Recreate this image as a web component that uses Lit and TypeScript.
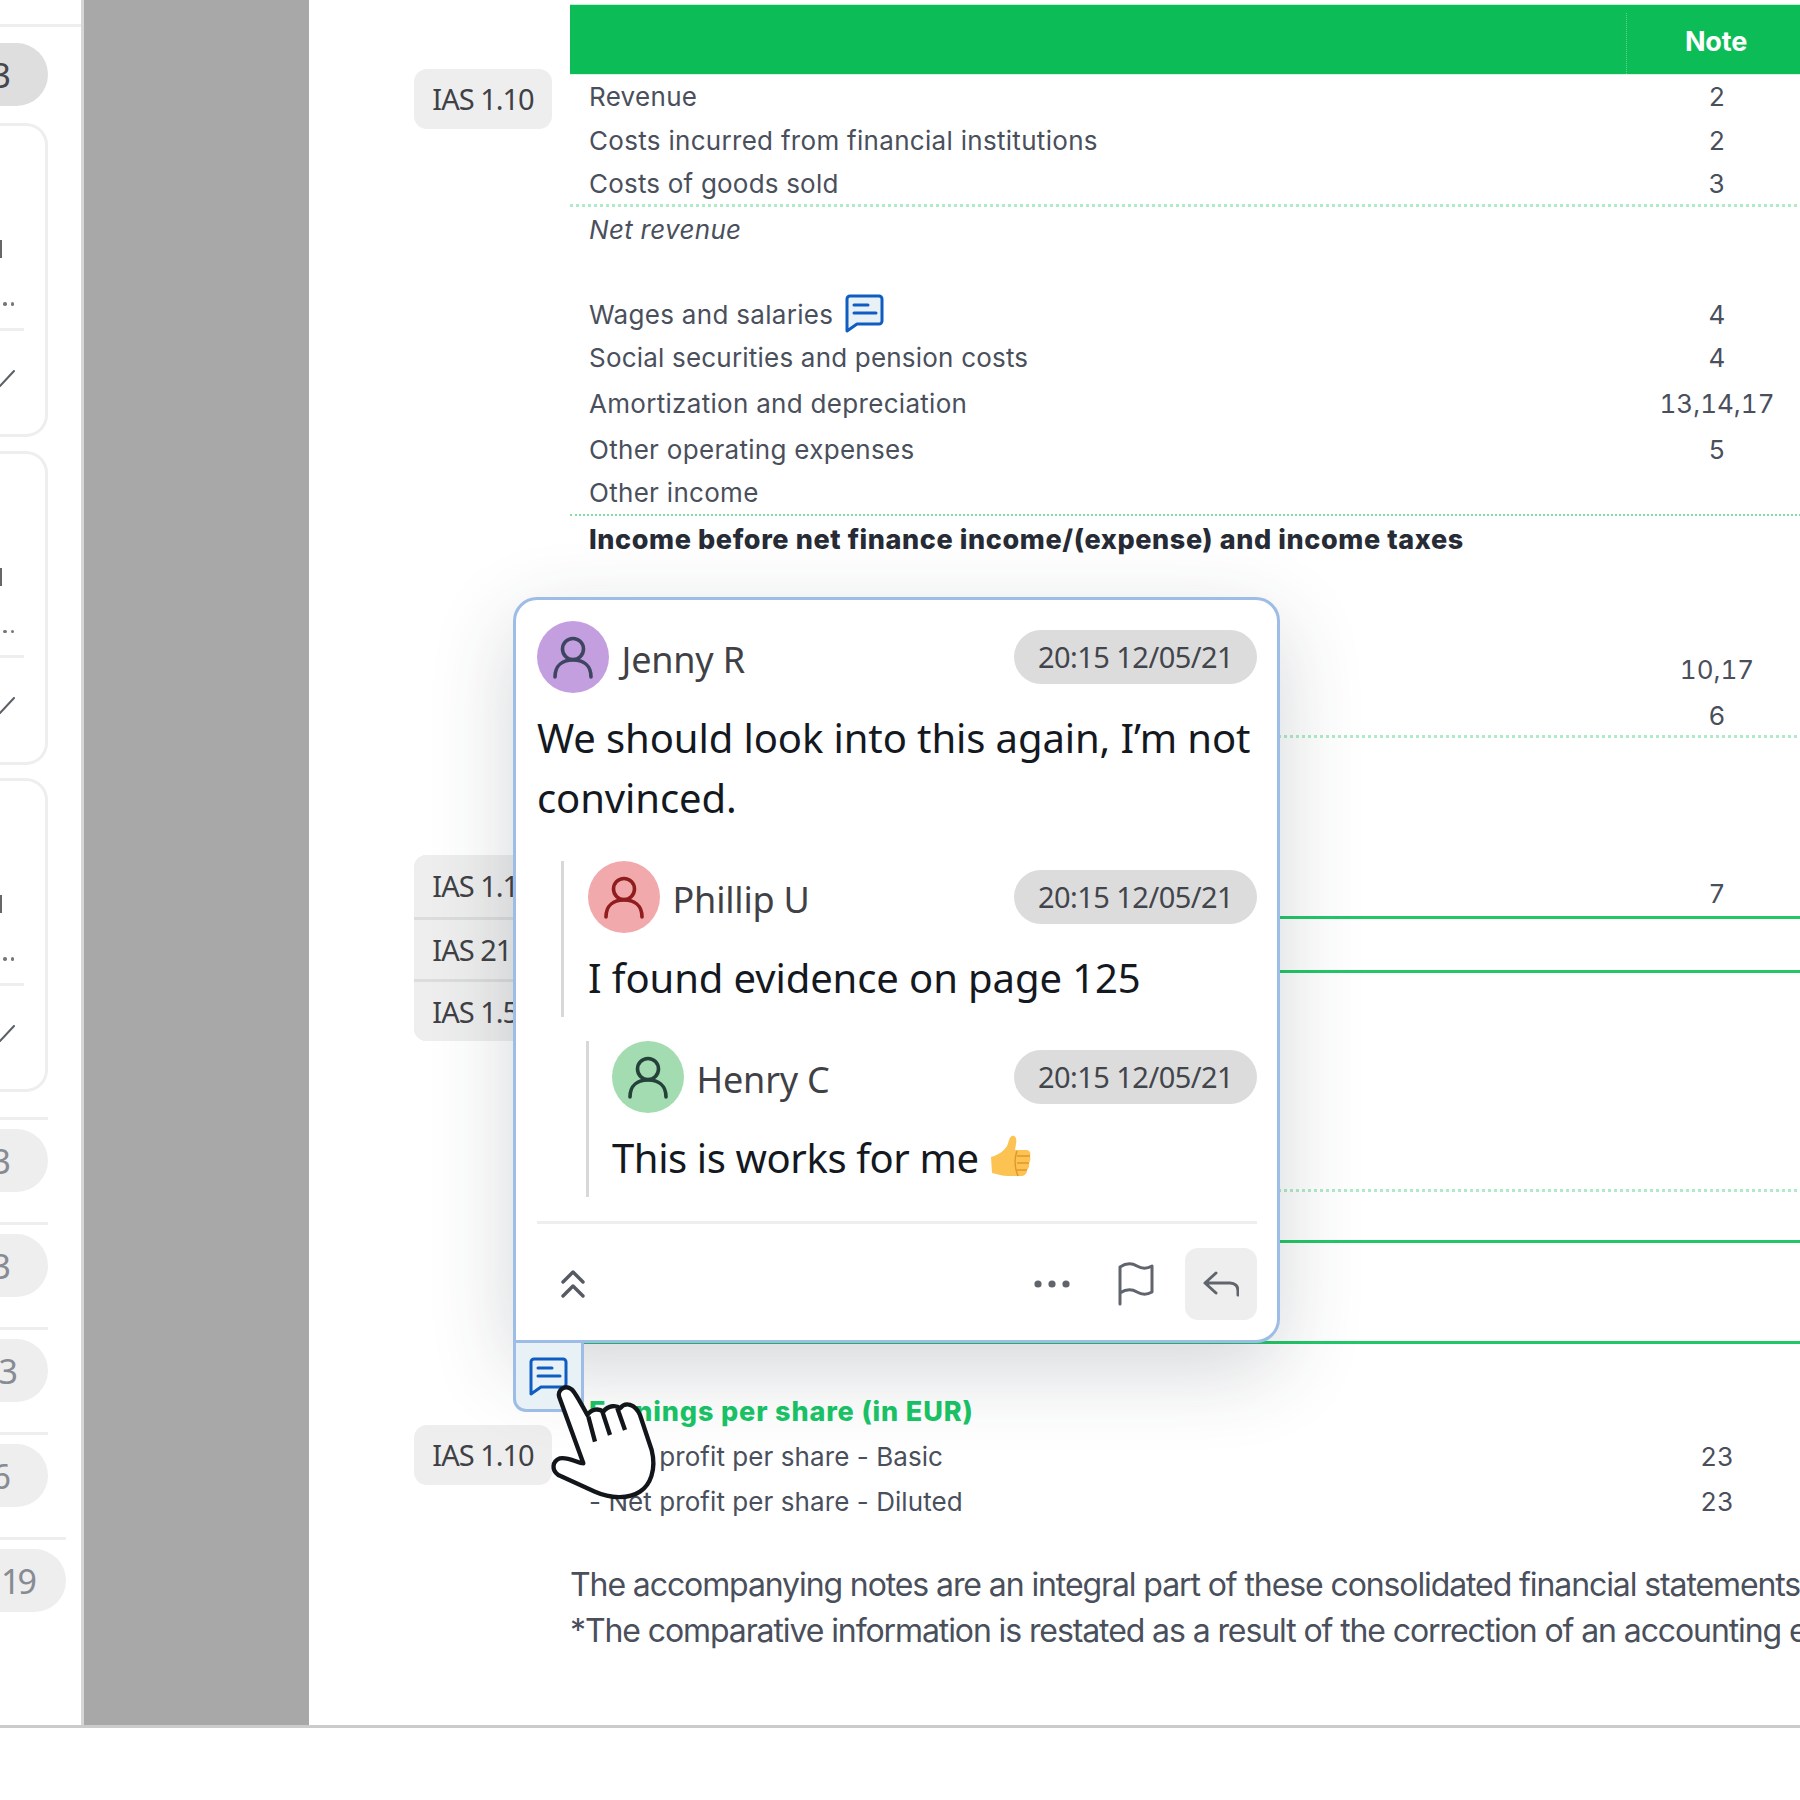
import { LitElement, html, css, svg } from "lit";
import { customElement } from "lit/decorators.js";

type Row = { label?: string; note?: string; h: number; cls?: string; icon?: boolean };

const ROWS: Row[] = [
  { label: "Revenue", note: "2", h: 43 },
  { label: "Costs incurred from financial institutions", note: "2", h: 44 },
  { label: "Costs of goods sold", note: "3", h: 45, cls: "dot nar" },
  { label: "Net revenue", h: 44, cls: "ital" },
  { h: 41 },
  { label: "Wages and salaries", note: "4", h: 44, icon: true },
  { label: "Social securities and pension costs", note: "4", h: 43, cls: "nar" },
  { label: "Amortization and depreciation", note: "13,14,17", h: 48 },
  { label: "Other operating expenses", note: "5", h: 44 },
  { label: "Other income", h: 45, cls: "dot thin" },
  { label: "Income before net finance income/(expense) and income taxes", h: 46, cls: "bold" },
  { h: 85 },
  { note: "10,17", h: 44 },
  { note: "6", h: 47, cls: "dot lo" },
  { h: 132 },
  { note: "7", h: 49, cls: "solid" },
  { h: 54, cls: "solid" },
  { h: 219, cls: "dot" },
  { h: 51, cls: "solid" },
  { h: 101, cls: "solid" },
  { h: 45 },
  { label: "Earnings per share (in EUR)", h: 44, cls: "earn" },
  { label: "- Net profit per share - Basic", note: "23", h: 46, cls: "nar2" },
  { label: "- Net profit per share - Diluted", note: "23", h: 44, cls: "nar2" },
];

const chat = (fill: string) => svg`
  <path d="M5 2h29a3 3 0 0 1 3 3v22a3 3 0 0 1-3 3H12L2 37V5a3 3 0 0 1 3-3Z" fill="${fill}" stroke="#0f5cc2" stroke-width="3" stroke-linejoin="round"/>
  <path d="M9 11h14M9 19h22" fill="none" stroke="#0f5cc2" stroke-width="3" stroke-linecap="round"/>`;

const person = (color: string) => html`<svg viewBox="0 0 72 72" width="72" height="72">
  <circle cx="36" cy="28" r="10.5" fill="none" stroke="${color}" stroke-width="3.6"/>
  <path d="M18 56C18 44 26 39 36 39C46 39 54 44 54 56" fill="none" stroke="${color}" stroke-width="3.6" stroke-linecap="round"/>
</svg>`;

@customElement("app-root")
export class AppRoot extends LitElement {
  static styles = css`
    :host { display: block; width: 1800px; height: 1800px; overflow: hidden; background: #fff; position: relative; font-family: "Noto Sans", sans-serif; }
    * { box-sizing: border-box; }
    .frame { display: flex; height: 1728px; border-bottom: 3px solid #cbcbcb; overflow: hidden; }

    .side { width: 84px; flex: none; border-right: 3px solid #d6d6d6; display: flex; flex-direction: column; overflow: hidden; }
    .topline { height: 27px; flex: none; border-bottom: 3px solid #eee; }
    .pill { width: 48px; height: 63px; flex: none; border-radius: 0 32px 32px 0; background: #eee; color: #878b93; font-size: 34px; display: flex; align-items: center; justify-content: flex-end; overflow: hidden; white-space: nowrap; }
    .pill.first { background: #dedede; color: #44474d; margin-top: 16px; }
    .pad38 { padding-right: 37px; }
    .pad32 { padding-right: 30px; }
    .pill.wide { width: 66px; padding-right: 32px; letter-spacing: -3px; }
    .card { width: 48px; height: 314px; flex: none; margin-top: 13.5px; border: 3px solid #eee; border-left: 0; border-radius: 0 22px 22px 0; display: flex; flex-direction: column; }
    .card.one { margin-top: 17px; }
    .frag { width: 2px; height: 18px; margin-top: 114px; background: #666; }
    .dots { display: flex; gap: 4px; padding-left: 3px; margin-top: 44px; }
    .dots i { width: 3.5px; height: 3.5px; border-radius: 50%; background: #777; }
    .sep { width: 24px; height: 3px; margin-top: 22px; background: #eee; }
    .check { display: block; margin-top: 39px; }
    .rule { width: 48px; height: 3px; flex: none; background: #eee; margin-top: 30px; margin-bottom: 9px; }
    .rule.wide { width: 66px; }
    .rule.firstrule { margin-top: 25px; }

    .gray { width: 225px; flex: none; background: #a8a8a8; }

    .doc { flex: 1; display: flex; min-width: 0; }
    .gutter { width: 261px; flex: none; padding: 69px 0 0 105px; display: flex; flex-direction: column; }
    .chip { width: 138px; height: 60px; flex: none; background: #eee; border-radius: 13px; color: #3f4146; font-size: 29px; line-height: 60px; letter-spacing: -1px; text-align: center; white-space: nowrap; overflow: hidden; }
    .stack { margin-top: 726px; width: 138px; background: #dcdcdc; border-radius: 13px; overflow: hidden; flex: none; display: flex; flex-direction: column; gap: 3px; }
    .stack .chip { border-radius: 0; height: 59px; line-height: 59px; }
    .stack .chip:first-child { height: 62px; line-height: 62px; }
    .last { margin-top: 384px; }

    .page { padding-top: 4px; width: 1491px; flex: none; font-family: Inter, sans-serif; color: #4a4f5c; }
    .head { height: 71px; background: #0cbd57; border-top: 1px solid #bfeed2; border-bottom: 1px solid #d4f4e2; display: flex; }
    .head .l { width: 1057px; border-right: 1px dotted rgba(255, 255, 255, 0.35); margin-top: 8px; }
    .head .n { width: 178px; color: #fff; font-weight: 700; font-size: 27px; letter-spacing: -0.2px; text-align: center; line-height: 62px; padding-top: 6px; }
    .row { display: flex; align-items: center; font-size: 26px; letter-spacing: 0.3px; white-space: nowrap; }
    .row.nar { letter-spacing: 0.2px; }
    .row.nar2 { letter-spacing: 0.07px; }
    .row.dot { border-bottom: 3px dotted #b0ebc9; }
    .row.thin { border-bottom: 2px dotted #7fe0a8; }
    .row.lo { padding-top: 4px; }
    .row.solid { border-bottom: 3px solid #22c768; }
    .row .lab { width: 1058px; padding-left: 19px; display: flex; align-items: center; gap: 12px; flex: none; }
    .row .num { width: 178px; text-align: center; flex: none; letter-spacing: 0; font-variant-numeric: tabular-nums; }
    .ital .lab { font-style: italic; }
    .bold .lab { font-weight: 800; font-size: 27px; color: #262b36; letter-spacing: 0.6px; }
    .earn .lab { font-weight: 800; font-size: 27px; color: #19c566; letter-spacing: 0.85px; }
    .inl { display: block; margin-top: -2px; }
    .foot { margin-top: 39px; font-size: 32px; line-height: 46px; letter-spacing: -1.1px; white-space: nowrap; color: #4a4f5c; }

    .pop { position: absolute; left: 513px; top: 597px; width: 767px; background: #fff; border: 3px solid #9dbde6; border-radius: 24px 24px 24px 0; padding: 21px 20px 20px 21px; box-shadow: 0 26px 84px rgba(40, 50, 60, 0.2); display: flex; flex-direction: column; color: #14181f; }
    .who { display: flex; align-items: center; height: 72px; }
    .av { width: 72px; height: 72px; border-radius: 50%; flex: none; }
    .av.p { background: #c39fe0; }
    .av.r { background: #f2a9ab; }
    .av.g { background: #a3dcb1; }
    .name { flex: 1; margin-left: 12.5px; margin-top: 4px; font-size: 36px; letter-spacing: -0.2px; color: #3f4146; }
    .date { width: 243px; height: 54px; flex: none; border-radius: 27px; background: #dcdcdc; color: #42454b; font-size: 29px; letter-spacing: -0.55px; line-height: 54px; text-align: center; }
    .msg { font-size: 40px; line-height: 60px; margin-top: 15px; letter-spacing: -0.1px; display: flex; align-items: center; gap: 11px; }
    .msg.tight { letter-spacing: -0.4px; }
    .msg svg { margin-top: -4px; }
    .reply { border-left: 3px solid #d8d8d8; padding-left: 24px; padding-bottom: 9px; margin-left: 24px; margin-top: 33px; }
    .reply.deep { margin-left: 49px; margin-top: 24px; padding-left: 23px; }
    .divider { height: 3px; background: #eee; margin-top: 24px; }
    .bar { display: flex; align-items: center; margin-top: 24px; height: 72px; }
    .bar .up { margin-left: 24px; margin-right: auto; display: block; }
    .bar .more { display: block; margin-right: 48px; }
    .bar .flag { display: block; margin-right: 31px; }
    .rbtn { width: 72px; height: 72px; border-radius: 13px; background: #eee; display: flex; align-items: center; justify-content: center; }
    .tab { position: absolute; left: -3px; top: calc(100% + 3px); width: 71px; height: 69px; background: #e8f2f6; border: 3px solid #9dbde6; border-top: 0; border-radius: 0 0 0 13px; display: flex; padding: 14px 0 0 13px; }
    .tab svg { display: block; }

    .hand { position: absolute; left: 500px; top: 1300px; width: 260px; height: 220px; }
  `;

  private date() { return html`<div class="date">20:15 12/05/21</div>`; }

  render() {
    return html`
      <div class="frame">
        <aside class="side">
          <div class="topline"></div>
          <div class="pill first pad38">3</div>
          ${[0, 1, 2].map((i) => html`<div class="card ${i === 0 ? "one" : ""}">
            <div class="frag"></div>
            <div class="dots"><i></i><i></i></div>
            <div class="sep"></div>
            <svg class="check" width="15" height="17" viewBox="0 0 15 17"><path d="M0 16 14 1" stroke="#5c6068" stroke-width="2" fill="none" stroke-linecap="round"/></svg>
          </div>`)}
          <div class="rule firstrule"></div>
          <div class="pill pad38">3</div>
          <div class="rule"></div>
          <div class="pill pad38">3</div>
          <div class="rule"></div>
          <div class="pill pad32">3</div>
          <div class="rule"></div>
          <div class="pill pad38">6</div>
          <div class="rule wide"></div>
          <div class="pill wide">19</div>
        </aside>
        <div class="gray"></div>
        <main class="doc">
          <div class="gutter">
            <div class="chip">IAS 1.10</div>
            <div class="stack">
              <div class="chip">IAS 1.10</div>
              <div class="chip">IAS 21.5</div>
              <div class="chip">IAS 1.54</div>
            </div>
            <div class="chip last">IAS 1.10</div>
          </div>
          <div class="page">
            <div class="head"><div class="l"></div><div class="n">Note</div></div>
            ${ROWS.map((r) => html`<div class="row ${r.cls ?? ""}" style="height:${r.h}px">
              <div class="lab">${r.label ?? ""}${r.icon ? html`<svg class="inl" width="39" height="39" viewBox="0 0 39 39">${chat("#e8f2f6")}</svg>` : ""}</div>
              <div class="num">${r.note ?? ""}</div>
            </div>`)}
            <div class="foot">
              <div>The accompanying notes are an integral part of these consolidated financial statements</div>
              <div>*The comparative information is restated as a result of the correction of an accounting error</div>
            </div>
          </div>
        </main>
      </div>

      <section class="pop">
        <div class="who"><div class="av p">${person("#3e4560")}</div><div class="name">Jenny R</div>${this.date()}</div>
        <div class="msg"><span>We should look into this again, I’m not convinced.</span></div>
        <div class="reply">
          <div class="who"><div class="av r">${person("#8f1d1d")}</div><div class="name">Phillip U</div>${this.date()}</div>
          <div class="msg">I found evidence on page 125</div>
        </div>
        <div class="reply deep">
          <div class="who"><div class="av g">${person("#24413a")}</div><div class="name">Henry C</div>${this.date()}</div>
          <div class="msg tight">This is works for me
            <svg width="41" height="42" viewBox="0 0 41 42">
              <path d="M22 1C26 0 27 5 26 9L25 15H36C40 15 41 18 40 21C41 24 40 27 39 28C40 31 38 34 37 35C37 39 34 41 31 41H18C12 41 8 39 2 38L1 22C8 20 14 16 17 11C19 7 19 2 22 1Z" fill="#fcc352"/>
              <path d="M27 21H40M27 28H39M27 35H37M27 16C24 24 25 34 28 41" fill="none" stroke="#e2972d" stroke-width="1.6"/>
            </svg>
          </div>
        </div>
        <div class="divider"></div>
        <div class="bar">
          <svg class="up" width="24" height="30" viewBox="0 0 24 30"><path d="M2 13 12 3 22 13M2 27 12 17 22 27" fill="none" stroke="#565a62" stroke-width="3.4" stroke-linecap="round" stroke-linejoin="round"/></svg>
          <svg class="more" width="36" height="8" viewBox="0 0 36 8"><circle cx="4" cy="4" r="3.6" fill="#60646c"/><circle cx="18" cy="4" r="3.6" fill="#60646c"/><circle cx="32" cy="4" r="3.6" fill="#60646c"/></svg>
          <svg class="flag" width="36" height="44" viewBox="0 0 36 44"><path d="M2 42V5C8 1 14 1 19 4C24 7 29 7 34 4V30C29 33 24 33 19 30C14 27 8 27 2 31" fill="none" stroke="#60646c" stroke-width="3" stroke-linecap="round" stroke-linejoin="round"/></svg>
          <div class="rbtn"><svg width="36" height="26" viewBox="0 0 36 26"><path d="M13 2 2 12 13 22M3 12H27C32 12 35 15 35 20V24" fill="none" stroke="#60646c" stroke-width="3" stroke-linecap="round" stroke-linejoin="round"/></svg></div>
        </div>
        <div class="tab"><svg width="39" height="39" viewBox="0 0 39 39">${chat("none")}</svg></div>
      </section>

      <svg class="hand" viewBox="0 0 780 660">
        <path d="M178 292C170 272 195 252 215 268C228 280 248 320 262 345C275 325 298 325 310 335C325 315 350 315 360 325C375 305 405 310 420 345L455 450C470 510 450 555 420 575C385 598 330 595 285 575L175 525C155 510 155 485 180 475C205 470 235 490 250 490Z" fill="#fff" stroke="#12161a" stroke-width="13" stroke-linejoin="round"/>
        <path d="M265 350 285 425M307 335 330 405M352 325 375 390" fill="none" stroke="#12161a" stroke-width="13"/>
      </svg>
    `;
  }
}
